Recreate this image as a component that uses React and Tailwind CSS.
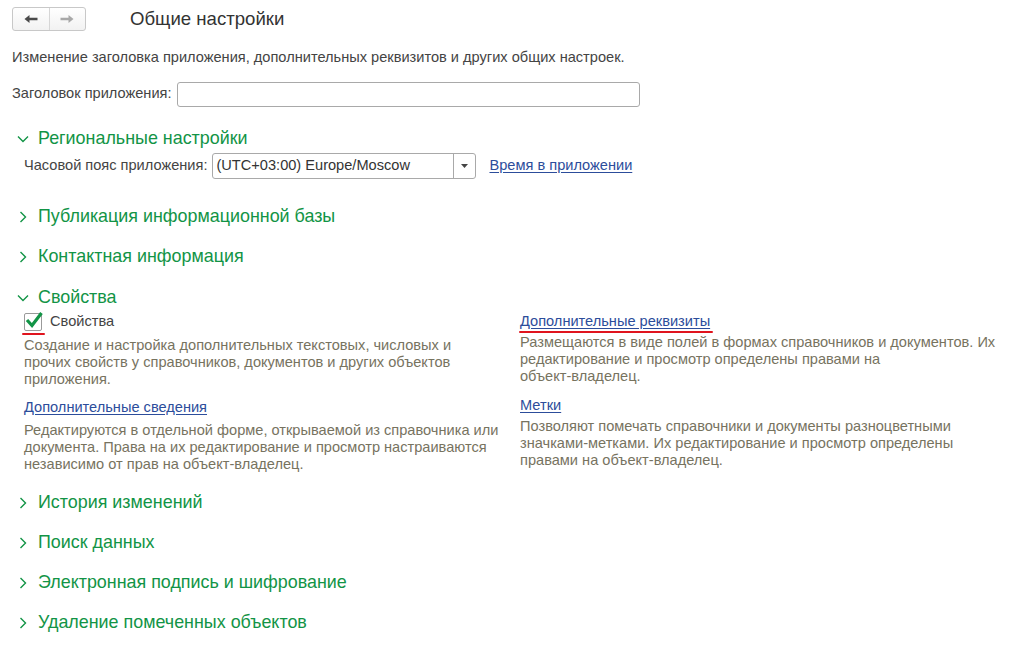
import React from "react";

const font = { fontFamily: '"Liberation Sans", Arial, sans-serif' };

function Chevron({ open }) {
  return (
    <svg width="12" height="12" viewBox="0 0 12 12" className="shrink-0">
      {open ? (
        <path d="M1 3.5 L6 8.5 L11 3.5" fill="none" stroke="#129446" strokeWidth="1.4" />
      ) : (
        <path d="M3.5 1 L8.5 6 L3.5 11" fill="none" stroke="#129446" strokeWidth="1.4" />
      )}
    </svg>
  );
}

function Section({ title, open, children }) {
  return (
    <div>
      <div className="flex items-center h-[24px] pl-[17px] gap-[9px]">
        <Chevron open={open} />
        <span className="text-[17.9px] text-[#129446] leading-none">{title}</span>
      </div>
      {children}
    </div>
  );
}

function Link({ children, className = "" }) {
  return (
    <a className={`text-[14.6px] text-[#2c4d9b] underline underline-offset-2 decoration-[#2c4d9b] cursor-pointer ${className}`}>
      {children}
    </a>
  );
}

function Note({ lines }) {
  return (
    <p className="text-[14.6px] leading-[17px] text-[#77735f] whitespace-nowrap">
      {lines.map((l, i) => (
        <React.Fragment key={i}>
          {l}
          {i < lines.length - 1 && <br />}
        </React.Fragment>
      ))}
    </p>
  );
}

export default function App() {
  return (
    <div className="w-[1022px] h-[647px] bg-white text-[#444] overflow-hidden" style={font}>
      {/* Header */}
      <div className="flex items-center pt-[7px] pl-[12px]">
        <div className="flex h-[24px] w-[74px] border border-[#c8c8c8] rounded-[3px] bg-gradient-to-b from-white to-[#f2f2f2]">
          <div className="flex-1 flex items-center justify-center border-r border-[#d6d6d6]">
            <svg width="14" height="10" viewBox="0 0 14 10">
              <path d="M0.5 5 L5.5 1 L5.5 3.8 L13.5 3.8 L13.5 6.2 L5.5 6.2 L5.5 9 Z" fill="#4a4a4a" />
            </svg>
          </div>
          <div className="flex-1 flex items-center justify-center">
            <svg width="14" height="10" viewBox="0 0 14 10">
              <path d="M13.5 5 L8.5 1 L8.5 3.8 L0.5 3.8 L0.5 6.2 L8.5 6.2 L8.5 9 Z" fill="#a8a8a8" />
            </svg>
          </div>
        </div>
        <h1 className="ml-[44px] text-[18.6px] text-[#333] leading-none">Общие настройки</h1>
      </div>

      <p className="mt-[19px] pl-[12px] text-[14.6px] text-[#444] leading-none">
        Изменение заголовка приложения, дополнительных реквизитов и других общих настроек.
      </p>

      <div className="flex items-center mt-[17px] pl-[12px]">
        <span className="text-[14.6px] text-[#444]">Заголовок приложения:</span>
        <div className="ml-[5px] w-[463px] h-[25px] border border-[#a9a9a9] rounded-[3px] bg-white" />
      </div>

      <div className="mt-[20px] flex flex-col">
        <Section title="Региональные настройки" open>
          <div className="flex items-center pl-[24px] mt-[2px]">
            <span className="text-[14.6px] text-[#444]">Часовой пояс приложения:</span>
            <div className="ml-[5px] flex w-[264px] h-[26px] border border-[#a9a9a9] rounded-[3px] bg-white">
              <div className="flex-1 flex items-center pl-[3px] text-[14.6px] text-[#333]">
                (UTC+03:00) Europe/Moscow
              </div>
              <div className="w-[22px] border-l border-[#a9a9a9] flex items-center justify-center">
                <svg width="7" height="4" viewBox="0 0 7 4">
                  <path d="M0 0 L7 0 L3.5 4 Z" fill="#444" />
                </svg>
              </div>
            </div>
            <Link className="ml-[13px]">Время в приложении</Link>
          </div>
        </Section>

        <div className="mt-[26px]">
          <Section title="Публикация информационной базы" />
        </div>
        <div className="mt-[16px]">
          <Section title="Контактная информация" />
        </div>
        <div className="mt-[17px]">
          <Section title="Свойства" open>
            <div className="grid grid-cols-[496px_1fr] pl-[24px]">
              <div>
                <div className="flex items-center h-[22px] mt-[1px]">
                  <div className="relative w-[18px] h-[18px] border border-[#9a9a9a] rounded-[2px] bg-white">
                    <svg width="20" height="20" viewBox="0 0 20 20" className="absolute -top-[4px] left-[-1px]">
                      <path d="M3 10 L8 15.5 L17.5 3" fill="none" stroke="#129446" strokeWidth="3.2" strokeLinejoin="miter" />
                    </svg>
                    <div className="absolute left-[-3px] top-[19px] w-[23px] h-[2px] bg-[#e0141e] rounded-full" />
                  </div>
                  <span className="ml-[8px] text-[14.6px] text-[#444]">Свойства</span>
                </div>
                <div className="mt-[4px]">
                  <Note
                    lines={[
                      "Создание и настройка дополнительных текстовых, числовых и",
                      "прочих свойств у справочников, документов и других объектов",
                      "приложения.",
                    ]}
                  />
                </div>
                <div className="mt-[7px]">
                  <Link>Дополнительные сведения</Link>
                </div>
                <div className="mt-[3px]">
                  <Note
                    lines={[
                      "Редактируются в отдельной форме, открываемой из справочника или",
                      "документа. Права на их редактирование и просмотр настраиваются",
                      "независимо от прав на объект-владелец.",
                    ]}
                  />
                </div>
              </div>
              <div>
                <div className="h-[22px] flex items-center">
                  <div className="relative">
                    <Link>Дополнительные реквизиты</Link>
                    <div className="absolute left-[-1px] right-[-3px] top-[22px] h-[2px] bg-[#e0141e] rounded-full" />
                  </div>
                </div>
                <div className="mt-[2px]">
                  <Note
                    lines={[
                      "Размещаются в виде полей в формах справочников и документов. Их",
                      "редактирование и просмотр определены правами на",
                      "объект-владелец.",
                    ]}
                  />
                </div>
                <div className="mt-[8px]">
                  <Link>Метки</Link>
                </div>
                <div className="mt-[1px]">
                  <Note
                    lines={[
                      "Позволяют помечать справочники и документы разноцветными",
                      "значками-метками. Их редактирование и просмотр определены",
                      "правами на объект-владелец.",
                    ]}
                  />
                </div>
              </div>
            </div>
          </Section>
        </div>

        <div className="mt-[18px]">
          <Section title="История изменений" />
        </div>
        <div className="mt-[16px]">
          <Section title="Поиск данных" />
        </div>
        <div className="mt-[16px]">
          <Section title="Электронная подпись и шифрование" />
        </div>
        <div className="mt-[16px]">
          <Section title="Удаление помеченных объектов" />
        </div>
      </div>
    </div>
  );
}
